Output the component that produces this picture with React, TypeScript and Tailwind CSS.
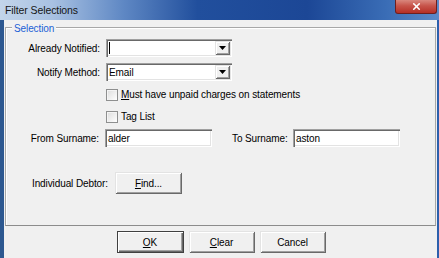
import { X } from "lucide-react";

const sunken =
  "bg-white shadow-[inset_1px_1px_#a0a0a0,inset_2px_2px_#696969,inset_-1px_-1px_#ffffff,inset_-2px_-2px_#e3e3e3]";
const raised =
  "bg-[#f0f0f0] shadow-[inset_1px_1px_#e3e3e3,inset_-1px_-1px_#696969,inset_2px_2px_#ffffff,inset_-2px_-2px_#a0a0a0]";

function Combo({ value, caret }: { value?: string; caret?: boolean }) {
  return (
    <div className={`flex h-[18px] w-[126px] items-center p-[2px] ${sunken}`}>
      <div className="flex flex-1 items-center pl-[1px]">
        {caret && <span className="h-[12px] w-[1px] bg-black" />}
        {value && <span>{value}</span>}
      </div>
      <div className={`flex h-[14px] w-[15px] items-center justify-center ${raised}`}>
        <svg width="7" height="4" viewBox="0 0 7 4">
          <path d="M0 0h7L3.5 4z" fill="#000" />
        </svg>
      </div>
    </div>
  );
}

function Check({ children }: { children: React.ReactNode }) {
  return (
    <div className="flex h-[13px] items-center pl-[100px]">
      <span className="h-[12px] w-[12px] border border-[#8e8f8f] bg-[linear-gradient(135deg,#dcdcdc,#ffffff)] shadow-[inset_1px_1px_#f4f4f4]" />
      <span className="ml-[3px]">{children}</span>
    </div>
  );
}

function Btn({ w, children, def }: { w: string; children: React.ReactNode; def?: boolean }) {
  return (
    <div
      className={`flex h-[22px] items-center justify-center ${w} ${
        def
          ? "bg-[#f0f0f0] shadow-[inset_1px_1px_#404040,inset_-1px_-1px_#404040,inset_2px_2px_#ffffff,inset_-2px_-2px_#696969,inset_-3px_-3px_#a0a0a0]"
          : raised
      }`}
    >
      {children}
    </div>
  );
}

export default function App() {
  return (
    <div className="flex h-[258px] w-[439px] flex-col overflow-hidden whitespace-nowrap bg-[#f0f0f0] font-['Liberation_Sans',Arial,sans-serif] text-[10px] tracking-[-0.1px] text-black">
      <div className="flex h-[20px] items-start bg-[linear-gradient(90deg,#c3d5ea_0%,#a8c1e2_12%,#5f88c4_28%,#214f9d_45%,#1c4796_70%,#3a6db6_88%,#5b89c8_100%)]">
        <span className="pl-[5px] pt-[3px] text-[10.5px] text-[#151515]">Filter Selections</span>
        <div className="ml-auto mr-[2px] flex h-[14px] w-[42px] items-center justify-center rounded-b-[3px] border border-t-0 border-[#6e1f1f] bg-[linear-gradient(180deg,#d9877d_0%,#c7544a_45%,#b52f26_100%)]">
          <X size={11} strokeWidth={3.5} color="#ffffff" />
        </div>
      </div>
      <div className="flex flex-1 border-l-4 border-r-2 border-l-[#2d5890] border-r-[#2c5fac]">
        <div className="flex flex-1 flex-col">
          <div className="relative mx-[1px] mt-[7px] h-[199px] border border-[#a7a7a7] border-b-[#8c8c8c] shadow-[inset_1px_1px_#ffffff]">
            <span className="absolute left-[6px] top-[-7px] bg-[#f0f0f0] px-[2px] text-[#1a5fd6]">Selection</span>
            <div className="flex flex-col pt-[11px]">
              <div className="flex items-center">
                <span className="w-[94px] text-right">Already Notified:</span>
                <div className="ml-[6px]">
                  <Combo caret />
                </div>
              </div>
              <div className="mt-[6px] flex items-center">
                <span className="w-[94px] text-right">Notify Method:</span>
                <div className="ml-[6px]">
                  <Combo value="Email" />
                </div>
              </div>
              <div className="mt-[7px]">
                <Check>
                  <u>M</u>ust have unpaid charges on statements
                </Check>
              </div>
              <div className="mt-[9px]">
                <Check>Tag List</Check>
              </div>
              <div className="mt-[6px] flex items-center">
                <span className="w-[93px] text-right">From Surname:</span>
                <div className={`ml-[6px] flex h-[18px] w-[107px] items-center pl-[3px] ${sunken}`}>alder</div>
                <span className="ml-[20px] w-[55px] text-right">To Surname:</span>
                <div className={`ml-[6px] flex h-[18px] w-[107px] items-center pl-[3px] ${sunken}`}>aston</div>
              </div>
              <div className="mt-[25px] flex items-center">
                <span className="w-[102px] text-right">Individual Debtor:</span>
                <div className="ml-[7px]">
                  <Btn w="w-[67px]">
                    <span>
                      <u>F</u>ind...
                    </span>
                  </Btn>
                </div>
              </div>
            </div>
          </div>
          <div className="mt-[5px] flex justify-center gap-[5px] pl-[1px]">
            <Btn w="w-[67px]" def>
              <span>
                <u>O</u>K
              </span>
            </Btn>
            <Btn w="w-[66px]">
              <span>
                <u>C</u>lear
              </span>
            </Btn>
            <Btn w="w-[66px]">Cancel</Btn>
          </div>
        </div>
      </div>
    </div>
  );
}
